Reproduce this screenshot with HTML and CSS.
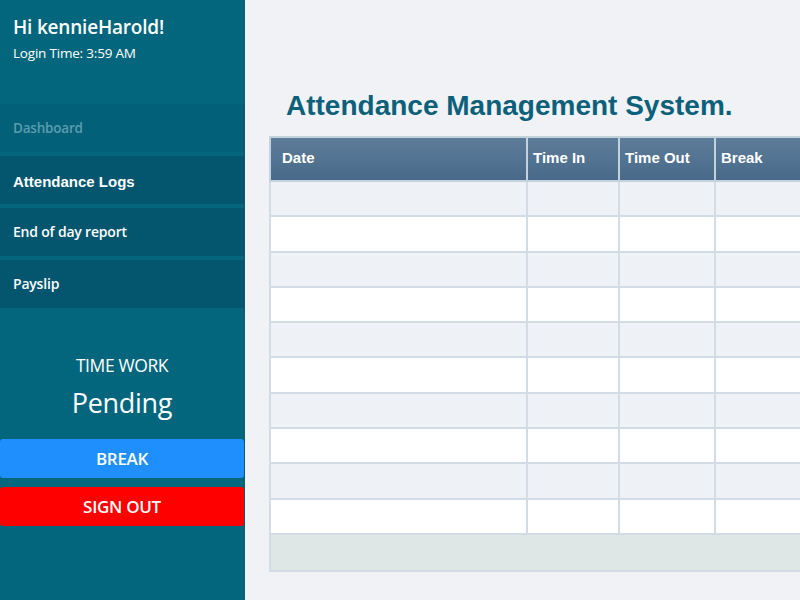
FILE: index.html
```html
<!DOCTYPE html>
<html>
<head>
<meta charset="utf-8">
<link rel="stylesheet" href="styles.css">
</head>
<body>
<div class="app">
  <aside class="sidebar">
    <div class="greeting">
      <div class="hello">Hi kennieHarold!</div>
      <div class="login">Login Time: 3:59 AM</div>
    </div>
    <nav class="nav">
      <div class="nav-item muted">Dashboard</div>
      <div class="nav-item active">Attendance Logs</div>
      <div class="nav-item">End of day report</div>
      <div class="nav-item">Payslip</div>
    </nav>
    <div class="timework">
      <div class="tw-label">TIME WORK</div>
      <div class="tw-value">Pending</div>
    </div>
    <button class="btn btn-break">BREAK</button>
    <button class="btn btn-signout">SIGN OUT</button>
  </aside>
  <main class="main">
    <h1 class="title">Attendance Management System.</h1>
    <table class="logs">
      <thead>
        <tr>
          <th class="c-date">Date</th>
          <th class="c-in">Time In</th>
          <th class="c-out">Time Out</th>
          <th class="c-break">Break</th>
          <th class="c-extra"></th>
        </tr>
      </thead>
      <tbody>
        <tr class="odd"><td></td><td></td><td></td><td></td><td></td></tr>
        <tr><td></td><td></td><td></td><td></td><td></td></tr>
        <tr class="odd"><td></td><td></td><td></td><td></td><td></td></tr>
        <tr><td></td><td></td><td></td><td></td><td></td></tr>
        <tr class="odd"><td></td><td></td><td></td><td></td><td></td></tr>
        <tr><td></td><td></td><td></td><td></td><td></td></tr>
        <tr class="odd"><td></td><td></td><td></td><td></td><td></td></tr>
        <tr><td></td><td></td><td></td><td></td><td></td></tr>
        <tr class="odd"><td></td><td></td><td></td><td></td><td></td></tr>
        <tr><td></td><td></td><td></td><td></td><td></td></tr>
      </tbody>
      <tfoot>
        <tr><td colspan="5"></td></tr>
      </tfoot>
    </table>
  </main>
</div>
</body>
</html>
```

FILE: styles.css
```css
* { box-sizing: border-box; }
html, body {
  margin: 0;
  padding: 0;
  width: 800px;
  height: 600px;
  overflow: hidden;
  background: #f0f2f6;
}
.app {
  display: flex;
  width: 800px;
  height: 600px;
}
.sidebar {
  width: 245px;
  flex: none;
  background: #03667d;
  border-right: 1px solid #0a5a6e;
  font-family: "Open Sans", "Noto Sans", sans-serif;
  color: #fff;
  display: flex;
  flex-direction: column;
}
.greeting {
  padding: 13px 13px 0;
  height: 104px;
}
.hello {
  font-size: 19px;
  font-weight: 600;
  letter-spacing: -0.2px;
  line-height: 28px;
}
.login {
  font-size: 13.5px;
  line-height: 18px;
  margin-top: 3px;
  letter-spacing: -0.2px;
}
.nav {
  display: flex;
  flex-direction: column;
  gap: 4px;
}
.nav-item {
  height: 48px;
  display: flex;
  align-items: center;
  padding-left: 13px;
  padding-bottom: 1px;
  background: #04566f;
  font-size: 14px;
  font-weight: 600;
  letter-spacing: -0.2px;
}
.nav-item.muted {
  background: #036079;
  color: #5d9cad;
  font-size: 13.5px;
}
.nav-item.active {
  font-family: "Liberation Sans", Arial, sans-serif;
  font-weight: 700;
  font-size: 15px;
  letter-spacing: 0;
  padding-top: 3px;
  padding-bottom: 0;
}
.timework {
  margin-top: 45px;
  text-align: center;
}
.tw-label {
  font-size: 17.5px;
  line-height: 24px;
  letter-spacing: -0.4px;
}
.tw-value {
  font-size: 27px;
  line-height: 36px;
  margin-top: 8px;
  letter-spacing: -0.3px;
}
.btn {
  display: block;
  width: 244px;
  height: 39px;
  border: none;
  border-radius: 3px;
  color: #fff;
  font-family: "Open Sans", "Noto Sans", sans-serif;
  font-weight: 600;
  font-size: 17px;
  letter-spacing: -0.3px;
  padding: 0;
}
.btn-break {
  margin-top: 18px;
  background: #1e8ffd;
}
.btn-signout {
  margin-top: 9px;
  background: #ff0000;
}
.main {
  flex: 1;
  min-width: 0;
  overflow: hidden;
  padding: 0 0 0 24px;
}
.title {
  margin: 88px 0 0 17px;
  font-family: "Liberation Sans", Arial, sans-serif;
  font-weight: 700;
  font-size: 28px;
  line-height: 36px;
  color: #0d6079;
  white-space: nowrap;
}
.logs {
  margin-top: 12px;
  border-collapse: collapse;
  table-layout: fixed;
  width: 640px;
  border: 2px solid #d2dce6;
}
.logs th, .logs td {
  border: 2px solid #d2dce6;
  padding: 0;
}
.logs thead th {
  height: 44px;
  background: linear-gradient(#5c7d99, #49698a);
  border-color: #c4d2de;
  color: #fff;
  font-family: "Liberation Sans", Arial, sans-serif;
  font-weight: 700;
  font-size: 15px;
  text-align: left;
  padding-left: 5px;
  padding-bottom: 3px;
}
.logs thead th.c-date { padding-left: 11px; }
.c-date { width: 257px; }
.c-in { width: 92px; }
.c-out { width: 96px; }
.c-break { width: 110px; }
.logs tbody td {
  height: 35.3px;
  background: #ffffff;
}
.logs tbody tr.odd td {
  background: #eef2f7;
}
.logs tfoot td {
  height: 37px;
  background: #dfe6e6;
}
```
